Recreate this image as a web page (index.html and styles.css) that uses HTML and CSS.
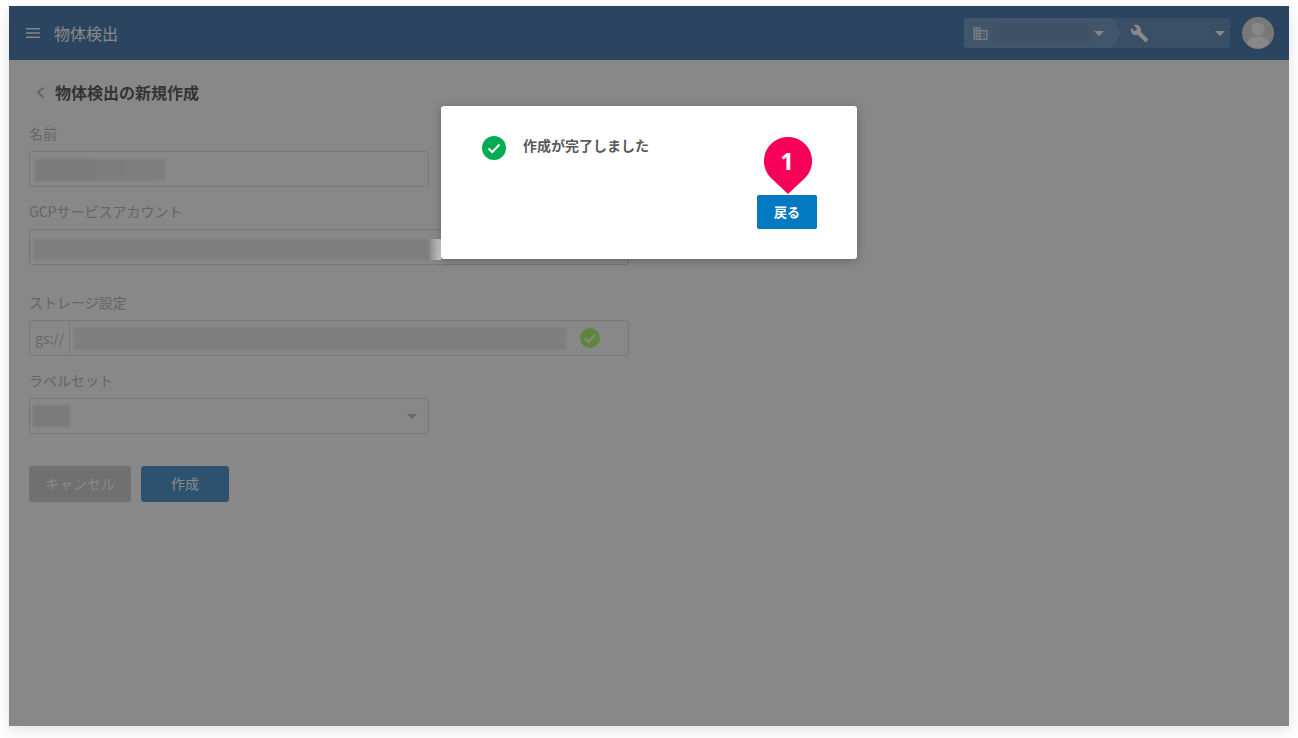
FILE: index.html
```html
<!DOCTYPE html>
<html lang="ja">
<head>
<meta charset="utf-8">
<title>物体検出</title>
<link rel="stylesheet" href="styles.css">
</head>
<body>
<div class="app">
  <header class="topbar">
    <svg class="menu-icon" viewBox="0 0 14 10"><path d="M0 0h14v1.6H0zM0 4.2h14v1.6H0zM0 8.4h14V10H0z"/></svg>
    <div class="app-title">物体検出</div>
    <div class="topbar-right">
      <div class="crumbs">
        <div class="crumb crumb-org">
          <svg class="org-icon" viewBox="0 0 24 24"><path d="M12 7V3H2v18h20V7H12zM6 19H4v-2h2v2zm0-4H4v-2h2v2zm0-4H4V9h2v2zm0-4H4V5h2v2zm4 12H8v-2h2v2zm0-4H8v-2h2v2zm0-4H8V9h2v2zm0-4H8V5h2v2zm10 12h-8v-2h2v-2h-2v-2h2v-2h-2V9h8v10zm-2-8h-2v2h2v-2zm0 4h-2v2h2v-2z"/></svg>
          <div class="crumb-blur crumb-blur-org"></div>
          <div class="caret caret-light"></div>
        </div>
        <div class="crumb crumb-tool">
          <svg class="tool-icon" viewBox="0 0 24 24"><path d="M22.7 19l-9.1-9.1c.9-2.3.4-5-1.5-6.9-2-2-5-2.4-7.4-1.3L9 6 6 9 1.6 4.7C.4 7.1.9 10.1 2.9 12.1c1.9 1.9 4.6 2.4 6.9 1.5l9.1 9.1c.4.4 1 .4 1.4 0l2.3-2.3c.5-.4.5-1.1.1-1.4z"/></svg>
          <div class="crumb-blur crumb-blur-tool"></div>
          <div class="caret caret-light"></div>
        </div>
      </div>
      <svg class="avatar" viewBox="0 0 32 32"><circle class="avatar-bg" cx="16" cy="16" r="16"/><circle class="avatar-fg" cx="16" cy="12" r="6.5"/><path class="avatar-fg" d="M5 27c1-5.500 6-7.500 11-7.500s10 2 11 7.500a16 16 0 0 1-22 0z"/></svg>
    </div>
  </header>

  <main class="content">
    <div class="page-head">
      <svg class="back-icon" viewBox="0 0 9 13"><path d="M7.500 1.500 2 6.500l5.500 5"/></svg>
      <h1 class="page-title">物体検出の新規作成</h1>
    </div>

    <div class="field field-short">
      <div class="field-label">名前</div>
      <div class="input"><div class="blur blur-name"></div></div>
    </div>
    <div class="field field-gap">
      <div class="field-label">GCPサービスアカウント</div>
      <div class="input"><div class="blur blur-account"></div></div>
    </div>
    <div class="field">
      <div class="field-label">ストレージ設定</div>
      <div class="input input-storage">
        <div class="prefix">gs://</div>
        <div class="blur blur-bucket"></div>
        <svg class="valid-icon" viewBox="0 0 20 20"><circle class="valid-bg" cx="10" cy="10" r="10"/><path class="valid-tick" d="M5 10.500 8.500 14 15 6.800"/></svg>
      </div>
    </div>
    <div class="field field-short">
      <div class="field-label">ラベルセット</div>
      <div class="input input-select">
        <div class="blur blur-label"></div>
        <div class="caret caret-dark"></div>
      </div>
    </div>

    <div class="actions">
      <button class="btn btn-cancel">キャンセル</button>
      <button class="btn btn-create">作成</button>
    </div>
  </main>

  <div class="overlay">
    <div class="smear"></div>
    <div class="modal">
      <div class="message">
        <svg class="success-icon" viewBox="0 0 24 24"><circle class="success-bg" cx="12" cy="12" r="12"/><path class="success-tick" d="M6.500 12.500 10.300 16 17.500 8.500"/></svg>
        <div class="message-text">作成が完了しました</div>
      </div>
      <div class="modal-footer">
        <button class="btn-back">戻る</button>
      </div>
      <div class="pin">
        <svg class="pin-shape" viewBox="0 0 48 57"><path d="M24 0A24 24 0 0 1 41 41L24 57 7 41A24 24 0 0 1 24 0z"/></svg>
        <span class="pin-number">1</span>
      </div>
    </div>
  </div>
</div>
</body>
</html>
```
FILE: styles.css
```css
* { box-sizing: border-box; }

html, body {
  margin: 0;
  height: 738px;
  overflow: hidden;
  background: #fff;
}

body {
  padding: 6px 9px;
  font-family: "Noto Sans CJK JP", "Noto Sans", sans-serif;
}

.app {
  position: relative;
  width: 1280px;
  height: 720px;
  background: #fff;
  box-shadow: 0 4px 14px rgba(0, 0, 0, .12);
  display: flex;
  flex-direction: column;
}

/* Top bar */
.topbar {
  height: 54px;
  flex: none;
  display: flex;
  align-items: center;
  padding: 0 15px 0 17px;
  background: #5182b6;
  color: #fff;
}

.menu-icon { width: 14px; height: 10px; fill: #fff; margin-right: 14px; opacity: .95; }
.app-title { font-size: 16px; line-height: 24px; }

.topbar-right { margin-left: auto; display: flex; align-items: center; }

.crumbs { display: flex; height: 30px; margin-right: 12px; }

.crumb { display: flex; align-items: center; height: 30px; border-radius: 3px; }

.crumb-org {
  width: 157px;
  padding-left: 8px;
  background: rgba(255, 255, 255, .25);
  clip-path: polygon(0 0, 148px 0, 100% 50%, 148px 100%, 0 100%);
}

.crumb-tool {
  width: 118px;
  margin-left: -9px;
  padding-left: 18px;
  background: rgba(255, 255, 255, .15);
  clip-path: polygon(0 0, 100% 0, 100% 100%, 0 100%, 9px 50%);
}

.org-icon { width: 17px; height: 17px; fill: #fff; opacity: .75; flex: none; }
.tool-icon { width: 19px; height: 19px; fill: #fff; flex: none; }

.crumb-blur { height: 20px; filter: blur(1.500px); flex: none; }
.crumb-blur-org { width: 96px; margin: 0 5px 0 4px; background: rgba(70, 100, 125, .14); }
.crumb-blur-tool { width: 58px; margin: 0 5px 0 3px; background: rgba(255, 255, 255, .05); }

.caret { width: 0; height: 0; border-style: solid; border-width: 5px 5px 0; border-color: transparent; flex: none; }
.caret-light { border-top-color: #fff; }
.caret-dark { border-top-color: #c4c4c4; margin-left: auto; }

.avatar { width: 32px; height: 32px; flex: none; }
.avatar-bg { fill: #e2e2e2; }
.avatar-fg { fill: #fff; }

/* Form */
.content { flex: 1; padding: 20px; background: #fff; }

.page-head { display: flex; align-items: center; height: 26px; margin-bottom: 18px; }

.back-icon {
  width: 9px;
  height: 13px;
  margin: 0 10px 2px 7px;
  fill: none;
  stroke: #c0c0c0;
  stroke-width: 2;
}

.page-title { margin: 0 0 2px; font-size: 16px; line-height: 24px; font-weight: 700; color: #626262; }

.field { width: 600px; margin-bottom: 15px; }
.field-short { width: 400px; }
.field-gap { margin-bottom: 28px; }

.field-label { font-size: 14px; line-height: 18px; margin-bottom: 9px; color: #bdbdbd; }

.input {
  height: 36px;
  display: flex;
  align-items: center;
  padding: 0 5px;
  border: 1px solid #e2e2e2;
  border-radius: 3px;
  overflow: hidden;
  background: #fff;
}

.blur { height: 22px; filter: blur(1.200px); flex: none; }

.blur-name {
  width: 130px;
  margin-top: 2px;
  background: linear-gradient(90deg, #e5e5e5 0, #e5e5e5 40%, #ebebeb 50%, #ededed 100%);
}

.blur-account { width: 630px; height: 21px; margin-top: 5px; margin-left: -2px; background: #ededed; }

.input-storage { padding: 0; }

.prefix {
  width: 40px;
  height: 100%;
  flex: none;
  display: flex;
  align-items: center;
  padding-left: 5px;
  border-right: 1px solid #e2e2e2;
  font-size: 14px;
  color: #c4c4c4;
}

.blur-bucket { width: 492px; margin-top: 2px; margin-left: 4px; background: #ededed; }

.valid-icon { width: 20px; height: 20px; flex: none; margin-left: 14px; }
.valid-bg { fill: #b2f870; }
.valid-tick { fill: none; stroke: #fff; stroke-width: 2; }

.input-select { padding: 0 11px 0 3px; }
.blur-label { width: 37px; background: #e6e6e6; }

.actions { display: flex; gap: 10px; margin-top: 32px; }

.btn {
  height: 36px;
  border: 0;
  border-radius: 3px;
  font: 14px/20px "Noto Sans CJK JP", sans-serif;
  color: #fff;
  padding: 0 0 2px;
}

.btn-cancel { width: 102px; background: #d2d2d2; }
.btn-create { width: 88px; background: #539ad2; }

/* Dialog */
.overlay {
  position: absolute;
  inset: 0;
  background: rgba(0, 0, 0, .467);
}

.smear {
  position: absolute;
  left: 419px;
  top: 233px;
  width: 13px;
  height: 21px;
  background: linear-gradient(90deg, rgba(225, 225, 225, 0), rgba(225, 225, 225, .85));
}

.modal {
  position: absolute;
  left: 432px;
  top: 100px;
  width: 416px;
  height: 153px;
  padding: 30px 40px 30px 41px;
  background: #fff;
  border-radius: 3px;
  box-shadow: 0 2px 10px rgba(0, 0, 0, .25);
}

.message { display: flex; gap: 17px; height: 59px; }
.success-icon { width: 24px; height: 24px; flex: none; }
.success-bg { fill: #02ac55; }
.success-tick { fill: none; stroke: #fff; stroke-width: 2; }
.message-text { margin-top: -1px; font-size: 14px; line-height: 20px; font-weight: 700; color: #5a5a5a; }

.modal-footer { display: flex; justify-content: flex-end; }

.btn-back {
  width: 60px;
  height: 34px;
  padding: 0;
  border: 0;
  border-radius: 2px;
  background: #0279c0;
  color: #fff;
  font: 700 13px/20px "Noto Sans CJK JP", sans-serif;
}

.pin {
  position: absolute;
  left: 323px;
  top: 31px;
  width: 48px;
  height: 57px;
}

.pin-shape { display: block; width: 48px; height: 57px; fill: #f7005a; }

.pin-number {
  position: absolute;
  left: 0;
  right: 2px;
  top: 6px;
  text-align: center;
  font-family: "Noto Sans", sans-serif;
  font-size: 24px;
  line-height: 36px;
  font-weight: 700;
  color: #fff;
}
```
